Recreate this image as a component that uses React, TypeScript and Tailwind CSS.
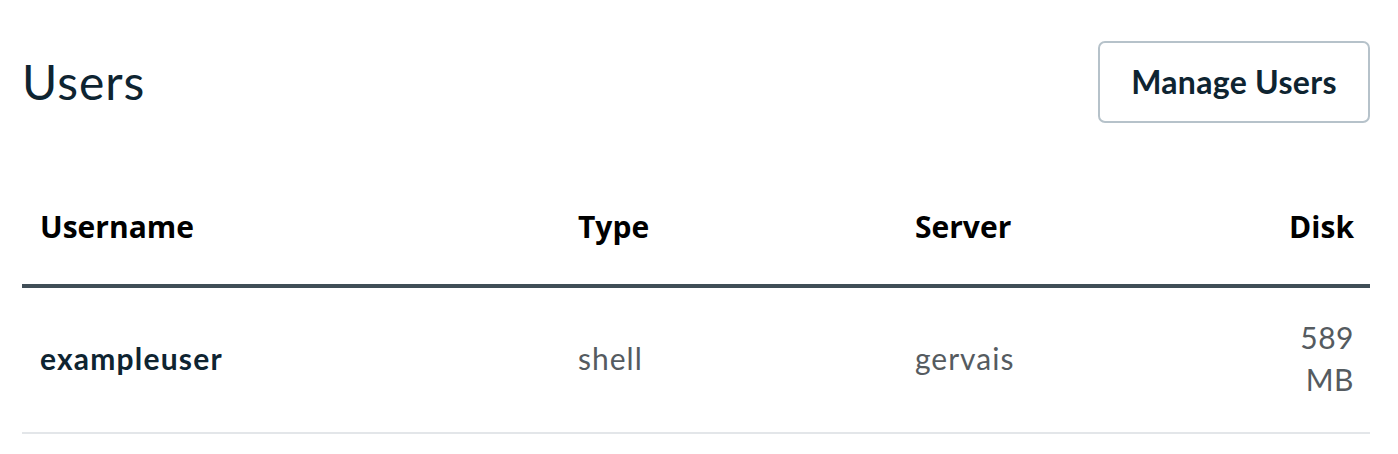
import React from 'react';

const users = [{ name: 'exampleuser', type: 'shell', server: 'gervais', disk: '589 MB' }];

const App: React.FC = () => {
  return (
    <div className="min-h-screen bg-white pt-[41px] pl-[22px] pr-[28px]" style={{ fontFamily: 'Lato, "Open Sans", sans-serif' }}>
      {/* Title bar */}
      <div className="flex items-center justify-between">
        <h1 className="text-[48px] leading-none tracking-[1px] text-[#0e2431] font-normal">Users</h1>
        <button className="h-[82px] w-[272px] rounded-[7px] border-2 border-[#b6c2ca] bg-white text-[32px] font-bold tracking-[0.3px] text-[#0e2431]">
          Manage Users
        </button>
      </div>

      {/* Table */}
      <table className="mt-[59px] w-full table-fixed border-collapse">
        <colgroup>
          <col className="w-[538px]" />
          <col className="w-[337px]" />
          <col />
          <col className="w-[100px]" />
        </colgroup>
        <thead>
          <tr className="border-b-4 border-[#404e57] text-[30px] leading-[42px] font-bold text-black" style={{ fontFamily: '"Open Sans", sans-serif' }}>
            <th className="pl-[18px] pt-[24px] pb-[36px] text-left font-bold">Username</th>
            <th className="pl-[18px] pt-[24px] pb-[36px] text-left font-bold">Type</th>
            <th className="pl-[18px] pt-[24px] pb-[36px] text-left font-bold">Server</th>
            <th className="pl-[18px] pr-[16px] pt-[24px] pb-[36px] text-right font-bold">Disk</th>
          </tr>
        </thead>
        <tbody>
          {users.map((u) => (
            <tr key={u.name} className="border-b-2 border-[#e3e6e9] text-[30px] leading-[42px] tracking-[1px] text-[#555b60]">
              <td className="pt-[28px] pb-[32px] pl-[18px] align-middle font-bold tracking-[1.2px] text-[#0e2431]">{u.name}</td>
              <td className="pt-[28px] pb-[32px] pl-[18px] align-middle">{u.type}</td>
              <td className="pt-[28px] pb-[32px] pl-[18px] align-middle">{u.server}</td>
              <td className="pt-[28px] pb-[32px] pl-[18px] pr-[16px] text-right align-middle tracking-[0.5px]">{u.disk}</td>
            </tr>
          ))}
        </tbody>
      </table>
    </div>
  );
};

export default App;
